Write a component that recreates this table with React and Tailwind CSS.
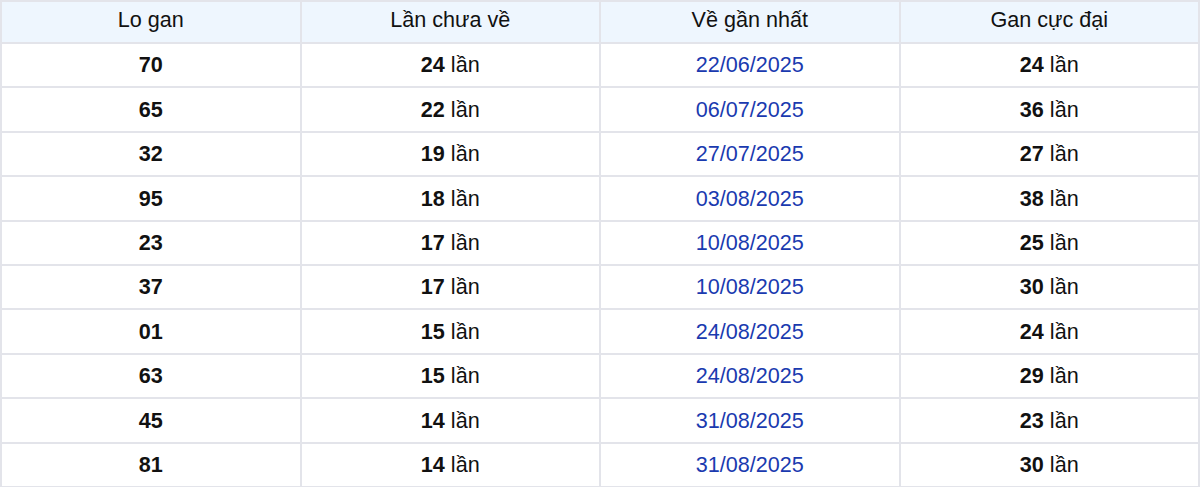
import React from "react";

const rows = [
  ["70", "24", "22/06/2025", "24"],
  ["65", "22", "06/07/2025", "36"],
  ["32", "19", "27/07/2025", "27"],
  ["95", "18", "03/08/2025", "38"],
  ["23", "17", "10/08/2025", "25"],
  ["37", "17", "10/08/2025", "30"],
  ["01", "15", "24/08/2025", "24"],
  ["63", "15", "24/08/2025", "29"],
  ["45", "14", "31/08/2025", "23"],
  ["81", "14", "31/08/2025", "30"],
];

export default function App() {
  return (
    <div className="w-[1200px] bg-white" style={{ fontFamily: "'Liberation Sans', Arial, sans-serif" }}>
      <table className="w-full border-collapse table-fixed text-[21.6px] text-[#111]">
        <thead>
          <tr className="bg-[#eef6fe] h-[42px]">
            {["Lo gan", "Lần chưa về", "Về gần nhất", "Gan cực đại"].map((h) => (
              <th key={h} className="border-2 border-[#e3e4ea] font-normal text-center pt-0 px-0 pb-[4px] leading-none">
                {h}
              </th>
            ))}
          </tr>
        </thead>
        <tbody>
          {rows.map((r, i) => (
            <tr key={i} className="h-[44.4px]">
              <td className="border-2 border-[#e3e4ea] text-center font-bold p-0 leading-none">{r[0]}</td>
              <td className="border-2 border-[#e3e4ea] text-center p-0 leading-none">
                <b>{r[1]}</b> lần
              </td>
              <td className="border-2 border-[#e3e4ea] text-center p-0 leading-none text-[#1a3aaf]">{r[2]}</td>
              <td className="border-2 border-[#e3e4ea] text-center p-0 leading-none">
                <b>{r[3]}</b> lần
              </td>
            </tr>
          ))}
        </tbody>
      </table>
    </div>
  );
}
